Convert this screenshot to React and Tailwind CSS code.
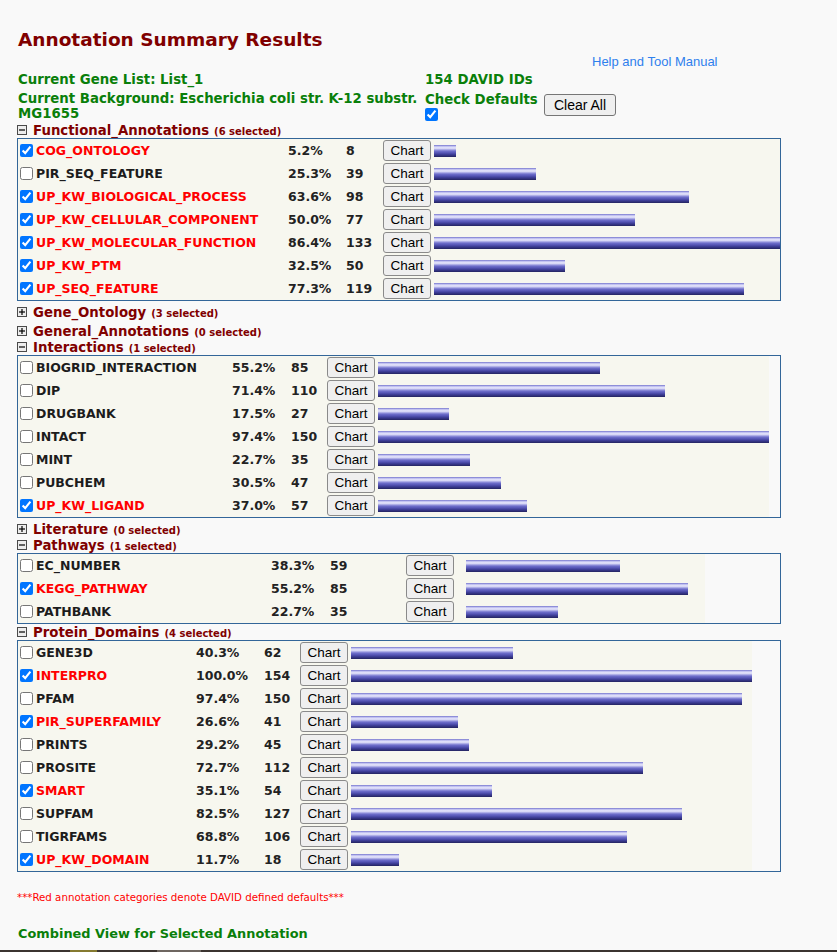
import React from "react";

const BAR =
  "bg-[linear-gradient(to_bottom,#7474cc_0%,#c0c0f0_12%,#ececfd_25%,#acace6_38%,#7070cc_50%,#5656b6_65%,#3c3c94_80%,#242460_100%)]";

const sections = [
  {
    name: "Functional_Annotations",
    sel: 6,
    open: true,
    mt: "mt-[1px]",
    cols: ["w-[270px]", "w-[58px]", "w-[37px]", "w-[51px]"],
    inner: "w-[762px]",
    rows: [
      ["COG_ONTOLOGY", 1, "5.2%", 8],
      ["PIR_SEQ_FEATURE", 0, "25.3%", 39],
      ["UP_KW_BIOLOGICAL_PROCESS", 1, "63.6%", 98],
      ["UP_KW_CELLULAR_COMPONENT", 1, "50.0%", 77],
      ["UP_KW_MOLECULAR_FUNCTION", 1, "86.4%", 133],
      ["UP_KW_PTM", 1, "32.5%", 50],
      ["UP_SEQ_FEATURE", 1, "77.3%", 119],
    ],
  },
  { name: "Gene_Ontology", sel: 3, open: false, mt: "mt-[3px]" },
  { name: "General_Annotations", sel: 0, open: false, mt: "mt-[3px]" },
  {
    name: "Interactions",
    sel: 1,
    open: true,
    mt: "mt-0",
    cols: ["w-[214px]", "w-[59px]", "w-[36px]", "w-[51px]"],
    inner: "w-[751px]",
    rows: [
      ["BIOGRID_INTERACTION", 0, "55.2%", 85],
      ["DIP", 0, "71.4%", 110],
      ["DRUGBANK", 0, "17.5%", 27],
      ["INTACT", 0, "97.4%", 150],
      ["MINT", 0, "22.7%", 35],
      ["PUBCHEM", 0, "30.5%", 47],
      ["UP_KW_LIGAND", 1, "37.0%", 57],
    ],
  },
  { name: "Literature", sel: 0, open: false, mt: "mt-[3px]" },
  {
    name: "Pathways",
    sel: 1,
    open: true,
    mt: "mt-0",
    cols: ["w-[253px]", "w-[59px]", "w-[76px]", "w-[60px]"],
    inner: "w-[687px]",
    rows: [
      ["EC_NUMBER", 0, "38.3%", 59],
      ["KEGG_PATHWAY", 1, "55.2%", 85],
      ["PATHBANK", 0, "22.7%", 35],
    ],
  },
  {
    name: "Protein_Domains",
    sel: 4,
    open: true,
    mt: "mt-0",
    cols: ["w-[178px]", "w-[68px]", "w-[36px]", "w-[51px]"],
    inner: "w-[734px]",
    rows: [
      ["GENE3D", 0, "40.3%", 62],
      ["INTERPRO", 1, "100.0%", 154],
      ["PFAM", 0, "97.4%", 150],
      ["PIR_SUPERFAMILY", 1, "26.6%", 41],
      ["PRINTS", 0, "29.2%", 45],
      ["PROSITE", 0, "72.7%", 112],
      ["SMART", 1, "35.1%", 54],
      ["SUPFAM", 0, "82.5%", 127],
      ["TIGRFAMS", 0, "68.8%", 106],
      ["UP_KW_DOMAIN", 1, "11.7%", 18],
    ],
  },
];

function Toggle({ open }) {
  return (
    <svg width="10" height="10" viewBox="0 0 10 10" className="shrink-0">
      <rect x="0.5" y="0.5" width="9" height="9" fill="#ededed" stroke="#4a4a4a" />
      <path d="M2 5h6" stroke="#000" strokeWidth="1.2" />
      {!open && <path d="M5 2v6" stroke="#000" strokeWidth="1.2" />}
    </svg>
  );
}

function Row({ r, cols }) {
  const [n, on, p, c] = r;
  const w = Math.round(parseFloat(p) * 4) + 1;
  return (
    <div className="flex h-[23px] items-center">
      <div className={`${cols[0]} flex shrink-0 items-center`}>
        <input
          type="checkbox"
          defaultChecked={!!on}
          className="m-0 ml-[2px] h-[13px] w-[13px] shrink-0"
        />
        <span
          className={`ml-[3px] whitespace-nowrap pt-[2px] ${on ? "text-[#ff0000]" : "text-[#1c1c1c]"}`}
        >
          {n}
        </span>
      </div>
      <div className={`${cols[1]} shrink-0 pt-[2px] text-[#222]`}>{p}</div>
      <div className={`${cols[2]} shrink-0 pt-[2px] text-[#222]`}>{c}</div>
      <div className={`${cols[3]} shrink-0`}>
        <button className="h-[21px] w-[48px] rounded-[3px] border border-[#8a8a8a] bg-[#efefef] font-['Liberation_Sans',Arial,sans-serif] text-[13.5px] font-normal text-black">
          Chart
        </button>
      </div>
      <div className={`h-[12px] shrink-0 ${BAR}`} style={{ width: w }} />
    </div>
  );
}

function Section({ s }) {
  return (
    <>
      <div className={`${s.mt} flex h-[16px] items-center`}>
        <Toggle open={s.open} />
        <span className="ml-[6px] pt-[2px] text-[13.3px] font-bold text-[#800000]">{s.name}</span>
        <span className="ml-[5px] pt-[3px] text-[10px] font-bold text-[#800000]">
          ({s.sel} selected)
        </span>
      </div>
      {s.open && (
        <div className="w-[764px] overflow-hidden border border-[#336699]">
          <div className={`${s.inner} bg-[#f7f7ef] text-[12.5px] font-bold`}>
            {s.rows.map((r) => (
              <Row key={r[0]} r={r} cols={s.cols} />
            ))}
          </div>
        </div>
      )}
    </>
  );
}

export default function App() {
  return (
    <div className="min-h-[952px] bg-[#f9f9f9] font-['DejaVu_Sans',Verdana,sans-serif]">
      <div className="flex flex-col pl-[17px]">
        <div className="ml-[1px] mt-[28px] h-[24px] text-[18.5px] font-bold leading-[24px] text-[#800000]">
          Annotation Summary Results
        </div>
        <div className="mt-[1px] flex h-[16px] items-center pl-[575px]">
          <a className="pt-[2px] font-['Liberation_Sans',Arial,sans-serif] text-[13px] text-[#2f80ed]">
            Help and Tool Manual
          </a>
        </div>
        <div className="mt-[2px] flex h-[16px] items-center pt-[2px] text-[13.3px] font-bold text-[#0a7f0a]">
          <div className="ml-[1px] w-[407px]">Current Gene List: List_1</div>
          <div>154 DAVID IDs</div>
        </div>
        <div className="mt-[2px] flex h-[32px] items-center text-[13.3px] font-bold text-[#0a7f0a]">
          <div className="ml-[1px] w-[407px] pt-[2px] leading-[15px]">
            <div className="whitespace-nowrap">
              Current Background: Escherichia coli str. K-12 substr.
            </div>
            <div>MG1655</div>
          </div>
          <div className="flex w-[119px] flex-col items-start pt-[2px]">
            <span className="leading-[17px]">Check Defaults</span>
            <input type="checkbox" defaultChecked className="m-0 h-[13px] w-[13px]" />
          </div>
          <button className="h-[22px] w-[72px] rounded-[3px] border border-[#767676] bg-[#efefef] font-['Liberation_Sans',Arial,sans-serif] text-[14px] font-normal text-black">
            Clear All
          </button>
        </div>
        {sections.map((s) => (
          <Section key={s.name} s={s} />
        ))}
        <div className="mt-[18px] flex h-[14px] items-center pt-[1px] text-[10.25px] text-[#ff0000]">
          ***Red annotation categories denote DAVID defined defaults***
        </div>
        <div className="ml-[1px] mt-[21px] flex h-[16px] items-center pt-[2px] text-[12.9px] font-bold text-[#0a7f0a]">
          Combined View for Selected Annotation
        </div>
      </div>
      <div className="mt-[9px] flex h-[4px]">
        <div className="w-[70px] bg-[#3b3430]" />
        <div className="w-[27px] bg-[#857a30]" />
        <div className="w-[60px] bg-[#3b3430]" />
        <div className="w-[44px] bg-[#6e6660]" />
        <div className="flex-1 bg-[#3b3430]" />
      </div>
    </div>
  );
}
